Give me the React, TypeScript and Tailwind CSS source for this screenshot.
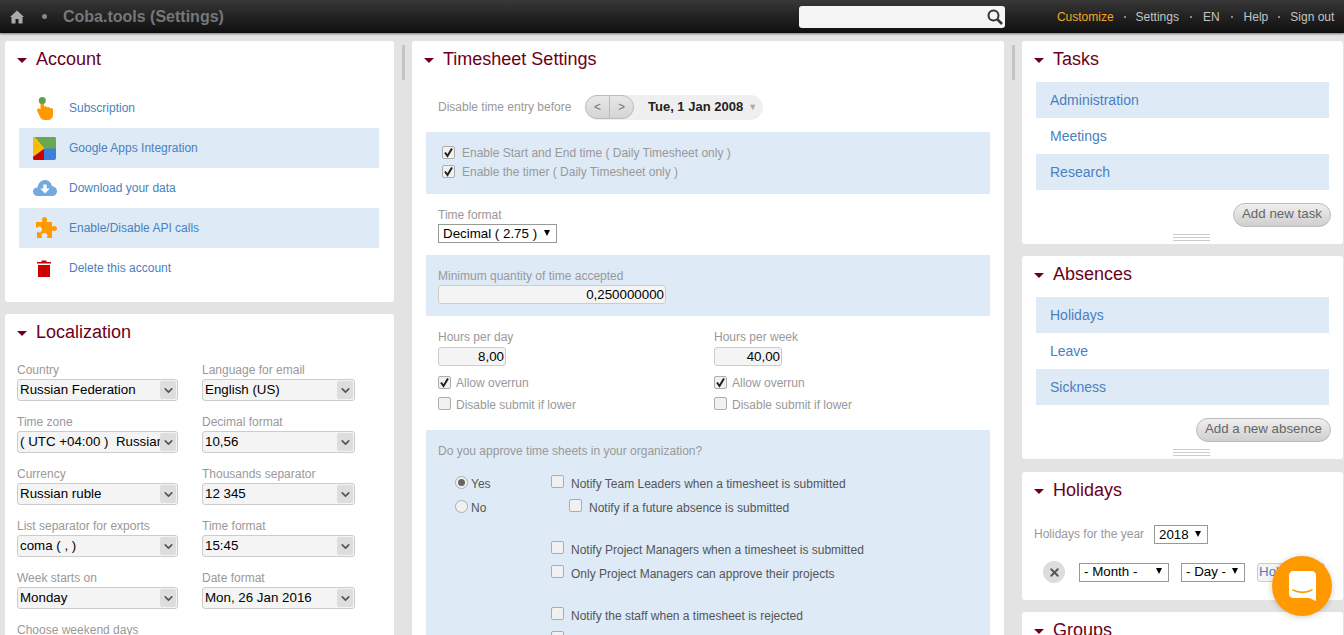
import { ChevronDown, X } from "lucide-react";

const localization = [
  ["Country", "Russian Federation", "Language for email", "English (US)"],
  ["Time zone", "( UTC +04:00 )  Russian", "Decimal format", "10,56"],
  ["Currency", "Russian ruble", "Thousands separator", "12 345"],
  ["List separator for exports", "coma ( , )", "Time format", "15:45"],
  ["Week starts on", "Monday", "Date format", "Mon, 26 Jan 2016"],
];

function CardTitle({ title }: { title: string }) {
  return (
    <div className="flex h-[36px] items-center pl-[12px]">
      <span className="mt-[2px] h-0 w-0 border-x-[5px] border-t-[5px] border-x-transparent border-t-[#6d0019]" />
      <h2 className="ml-[9px] text-[18px] leading-[22px] font-normal text-[#6d0019]">{title}</h2>
    </div>
  );
}

function HandIcon() {
  return (
    <svg width="16" height="23" viewBox="0 0 16 23">
      <path d="M3.500 6V12.500L2 11.500C0.500 11 -0.500 12.500 0.300 14L3 20C4 22 5.500 23 8 23H10.500C14 23 16 21 16 17.500V12.500C16 11 14 10.500 13 11.500C13 10 11 9.500 10 10.500C10 9.300 8.500 9 7 9.500V6C7 4 3.500 4 3.500 6Z" fill="#ff9900" />
      <circle cx="5.300" cy="3.500" r="3.500" fill="#5f9e4f" />
    </svg>
  );
}

function GoogleIcon() {
  return (
    <svg width="23" height="23" viewBox="0 0 23 23">
      <rect width="23" height="23" rx="2" fill="#3f7fdc" />
      <path d="M2 0H21C22 0 23 1 23 2V11.500H11.500Z" fill="#6aa84f" />
      <path d="M0 2C0 1 1 0 2 0L11.500 11.500L0 20Z" fill="#fbbc05" />
      <path d="M0 22V20L11 12V23H1Z" fill="#cc0000" />
    </svg>
  );
}

function CloudIcon() {
  return (
    <svg width="24" height="16" viewBox="0 0 24 16">
      <path d="M5 16C2 16 0 14 0 11.500C0 9 2 7.500 4.500 7.500C5 3 8.500 0 12 0C15.500 0 18 2.500 19 6C22 6.500 24 8.500 24 11C24 14 22 16 19 16Z" fill="#74a9dd" />
      <path d="M10.300 4.500H13.700V8.500H16.800L12 13.500L7.200 8.500H10.300Z" fill="#fff" />
    </svg>
  );
}

function PuzzleIcon() {
  return (
    <svg width="21" height="22" viewBox="0 0 21 22">
      <path d="M0 5H6.500C6.500 4 6 3.500 6 2.500C6 1 7 0 8.500 0C10 0 11 1 11 2.500C11 3.500 10.500 4 10.500 5H16V9.500C17 9.500 17.500 9 18.500 9C20 9 21 10 21 11.500C21 13 20 14 18.500 14C17.500 14 17 13.500 16 13.500V21H11C11 20 11.500 19.500 11.500 18.500C11.500 17 10 16 8.500 16C7 16 5.500 17 5.500 18.500C5.500 19.500 6 20 6 21H1V14.500C2 15 2.500 15.500 3.500 15.500C5 15.500 6 14 6 12.500C6 11 5 9.500 3.500 9.500C2.500 9.500 1 10.500 0 11Z" fill="#ff9900" />
    </svg>
  );
}

function TrashIcon() {
  return (
    <svg width="14" height="17" viewBox="0 0 14 17">
      <path d="M0 2H4.500V0.500H9.500V2H14V3.500H0Z" fill="#cc0000" />
      <path d="M1 5H13V17H1Z" fill="#cc0000" />
    </svg>
  );
}

const accountRows = [
  { label: "Subscription", icon: <HandIcon />, pad: "pl-[18px]", shaded: false },
  { label: "Google Apps Integration", icon: <GoogleIcon />, pad: "pl-[14px]", shaded: true },
  { label: "Download your data", icon: <CloudIcon />, pad: "pl-[14px]", shaded: false },
  { label: "Enable/Disable API calls", icon: <PuzzleIcon />, pad: "pl-[17px]", shaded: true },
  { label: "Delete this account", icon: <TrashIcon />, pad: "pl-[18px]", shaded: false },
];

function Check({ on = false }: { on?: boolean }) {
  return (
    <span className="flex h-[13px] w-[13px] shrink-0 items-center justify-center rounded-[2px] border border-[#adadad] bg-[#f1f1f1]">
      {on && (
        <svg width="11" height="11" viewBox="0 0 11 11">
          <path d="M2 5.500L4.500 9L9 1.500" fill="none" stroke="#222" strokeWidth="2" />
        </svg>
      )}
    </span>
  );
}

function Radio({ on = false }: { on?: boolean }) {
  return (
    <span className="flex h-[13px] w-[13px] shrink-0 items-center justify-center rounded-full border border-[#adadad] bg-[#f1f1f1]">
      {on && <span className="h-[7px] w-[7px] rounded-full bg-[#666]" />}
    </span>
  );
}

function PlainSelect({ value, className }: { value: string; className: string }) {
  return (
    <div className={`flex h-[19px] items-center justify-between border border-[#999] bg-white pr-[6px] pl-[4px] text-[13.33px] leading-none text-black ${className}`}>
      <span className="whitespace-nowrap">{value}</span>
      <span className="mb-[2px] h-0 w-0 border-x-[3.500px] border-t-[6px] border-x-transparent border-t-black" />
    </div>
  );
}

function NumberBox({ value, className }: { value: string; className: string }) {
  return (
    <div className={`flex h-[19px] items-center justify-end rounded-[3px] border border-[#ccc] bg-[#f4f4f4] pr-[1px] text-[13.33px] leading-none text-black ${className}`}>
      {value}
    </div>
  );
}

function HoursColumn({ label, value }: { label: string; value: string }) {
  return (
    <div>
      <div className="h-[17px] text-[12px] leading-[14px] text-[#999]">{label}</div>
      <NumberBox value={value} className="w-[68px]" />
      <div className="mt-[6px] flex h-[22px] items-center gap-[5px] text-[12px] text-[#999]">
        <span className="-mt-[1px]"><Check on /></span>
        Allow overrun
      </div>
      <div className="flex h-[22px] items-center gap-[5px] text-[12px] text-[#999]">
        <span className="-mt-[3px]"><Check /></span>
        Disable submit if lower
      </div>
    </div>
  );
}

function NotifyRow({ label, nested = false }: { label: string; nested?: boolean }) {
  return (
    <div className={`flex h-[24px] items-center gap-[7px] text-[12px] text-[#555] ${nested ? "pl-[18px]" : ""}`}>
      <span className="-mt-[5px]"><Check /></span>
      {label}
    </div>
  );
}

function ListCard({ title, items, action }: { title: string; items: string[]; action: string }) {
  return (
    <section className="h-[203px] shrink-0 rounded-[3px] bg-white">
      <CardTitle title={title} />
      <div className="mt-[5px] pr-[14px] pl-[14px]">
        {items.map((item, index) => (
          <div key={item} className={`flex h-[36px] items-center pl-[14px] text-[14px] text-[#4a7fc1] ${index % 2 === 0 ? "bg-[#deeaf6]" : ""}`}>
            {item}
          </div>
        ))}
      </div>
      <div className="mt-[13px] flex justify-end pr-[12px]">
        <button className="h-[24px] rounded-full border border-[#bbb] bg-gradient-to-b from-[#efefef] to-[#cfcfcf] px-[8px] pb-[2px] text-[13.33px] leading-none text-[#666]">
          {action}
        </button>
      </div>
      <div className="mt-[7px] ml-[151px] flex w-[37px] flex-col gap-[2px]">
        <span className="h-px bg-[#ccc]" />
        <span className="h-px bg-[#ccc]" />
        <span className="h-px bg-[#ccc]" />
      </div>
    </section>
  );
}

export default function App() {
  return (
    <div className="relative h-[635px] overflow-hidden bg-[#e3e3e3] font-['Liberation_Sans',Arial,sans-serif]">
      {/* Top bar */}
      <header className="flex h-[33px] items-center bg-gradient-to-b from-[#383838] to-[#0f0f0f] shadow-[0_1px_2px_#777]">
        <svg className="ml-[10px]" width="14" height="14" viewBox="0 0 14 14">
          <path d="M7 0.500L14 7L12.500 7V13.500H8.500V9H5.500V13.500H1.500V7H0Z" fill="#aaa" />
        </svg>
        <span className="ml-[18px] h-[5px] w-[5px] rounded-full bg-[#888]" />
        <span className="ml-[16px] text-[16px] font-bold text-[#777]">Coba.tools (Settings)</span>
        <div className="ml-[575px] flex h-[22px] w-[206px] items-center justify-end rounded-[3px] bg-[#f5f5f5] pr-[2px]">
          <svg width="16" height="16" viewBox="0 0 16 16">
            <circle cx="6.500" cy="6.500" r="5" fill="none" stroke="#333" strokeWidth="2" />
            <path d="M10.500 10.500L15 15" stroke="#333" strokeWidth="2.500" />
          </svg>
        </div>
        <nav className="ml-[52px] flex items-center text-[12px] text-[#c4c4c4]">
          <span className="text-[#f5a623]">Customize</span>
          <span className="mx-[10px] h-[2px] w-[2px] bg-[#888]" />
          <span>Settings</span>
          <span className="mx-[11px] h-[2px] w-[2px] bg-[#888]" />
          <span>EN</span>
          <span className="mx-[11px] h-[2px] w-[2px] bg-[#888]" />
          <span>Help</span>
          <span className="mx-[10px] h-[2px] w-[2px] bg-[#888]" />
          <span>Sign out</span>
        </nav>
      </header>

      <main className="flex pt-[8px] pl-[5px]">
        {/* Left column */}
        <div className="flex w-[389px] shrink-0 flex-col gap-[12px]">
          <section className="h-[261px] rounded-[3px] bg-white">
            <CardTitle title="Account" />
            <div className="mt-[11px] mr-[15px] ml-[14px]">
              {accountRows.map((row) => (
                <div key={row.label} className={`flex h-[40px] items-center text-[12px] text-[#4a7fc1] ${row.shaded ? "bg-[#deeaf6]" : ""}`}>
                  <div className={`flex w-[50px] shrink-0 ${row.pad}`}>{row.icon}</div>
                  {row.label}
                </div>
              ))}
            </div>
          </section>

          <section className="h-[400px] rounded-[3px] bg-white">
            <CardTitle title="Localization" />
            <div className="mt-[12px] grid grid-cols-[161px_153px] gap-x-[24px] gap-y-[13px] pl-[12px]">
              {localization.flatMap(([labelA, valueA, labelB, valueB]) => [
                [labelA, valueA],
                [labelB, valueB],
              ]).map(([label, value]) => (
                <div key={label}>
                  <div className="h-[17px] text-[12px] leading-[17px] text-[#999]">{label}</div>
                  <div className="flex h-[22px] items-center overflow-hidden rounded-[3px] border border-[#ccc] bg-[#f4f4f4] pr-[1px] pl-[2px] text-[13.33px] leading-none text-black">
                    <span className="min-w-0 flex-1 overflow-hidden pb-[1px] whitespace-pre">{value}</span>
                    <span className="flex h-[18px] w-[16px] shrink-0 items-center justify-center rounded-[2px] bg-[#ddd]">
                      <ChevronDown size={13} strokeWidth={3} color="#555" />
                    </span>
                  </div>
                </div>
              ))}
              <div className="h-[17px] text-[12px] leading-[17px] whitespace-nowrap text-[#999]">Choose weekend days</div>
            </div>
          </section>
        </div>

        {/* Gutter */}
        <div className="w-[18px] shrink-0 pt-[4px] pl-[8px]">
          <div className="h-[35px] w-[3px] bg-[#c4c4c4]" />
        </div>

        {/* Middle column */}
        <section className="h-[700px] w-[592px] shrink-0 rounded-[3px] bg-white">
          <CardTitle title="Timesheet Settings" />
          <div className="mt-[18px] flex h-[24px] items-center pl-[26px]">
            <span className="w-[147px] text-[12px] text-[#999]">Disable time entry before</span>
            <div className="flex h-[25px] w-[178px] items-center rounded-full bg-[#efefef]">
              <div className="flex h-[24px] w-[49px] rounded-full border border-[#bbb] bg-gradient-to-b from-[#e8e8e8] to-[#d4d4d4] text-[12px] text-[#777]">
                <span className="flex flex-1 items-center justify-center border-r border-[#bbb]">&lt;</span>
                <span className="flex flex-1 items-center justify-center">&gt;</span>
              </div>
              <span className="ml-[14px] text-[13px] font-bold text-[#222]">Tue, 1 Jan 2008</span>
              <span className="mt-[2px] ml-[5px] text-[9px] text-[#aaa]">▼</span>
            </div>
          </div>

          <div className="mx-[14px] mt-[13px] bg-[#deeaf6] pt-[11px] pb-[13px] pl-[16px] text-[12px] text-[#999]">
            <div className="flex h-[19px] items-center gap-[7px]"><Check on />Enable Start and End time ( Daily Timesheet only )</div>
            <div className="flex h-[19px] items-center gap-[7px]"><Check on />Enable the timer ( Daily Timesheet only )</div>
          </div>

          <div className="px-[26px] pt-[13px] pb-[12px]">
            <div className="h-[17px] text-[12px] leading-[17px] text-[#999]">Time format</div>
            <PlainSelect value="Decimal ( 2.75 )" className="w-[119px]" />
          </div>

          <div className="mx-[14px] bg-[#deeaf6] px-[12px] pt-[13px] pb-[12px]">
            <div className="h-[17px] text-[12px] leading-[17px] text-[#999]">Minimum quantity of time accepted</div>
            <NumberBox value="0,250000000" className="w-[228px]" />
          </div>

          <div className="grid grid-cols-[276px_1fr] px-[26px] pt-[14px] pb-[14px]">
            <HoursColumn label="Hours per day" value="8,00" />
            <HoursColumn label="Hours per week" value="40,00" />
          </div>

          <div className="mx-[14px] bg-[#deeaf6] pt-[12px] pb-[12px]">
            <div className="pl-[12px] text-[12px] leading-[18px] text-[#999]">Do you approve time sheets in your organization?</div>
            <div className="mt-[12px] flex pl-[29px]">
              <div className="w-[96px] shrink-0 text-[12px] text-[#555]">
                <div className="flex h-[24px] items-center gap-[3px]"><span className="-mt-[4px]"><Radio on /></span>Yes</div>
                <div className="flex h-[24px] items-center gap-[3px]"><span className="-mt-[4px]"><Radio /></span>No</div>
              </div>
              <div>
                <NotifyRow label="Notify Team Leaders when a timesheet is submitted" />
                <NotifyRow label="Notify if a future absence is submitted" nested />
                <div className="h-[18px]" />
                <NotifyRow label="Notify Project Managers when a timesheet is submitted" />
                <NotifyRow label="Only Project Managers can approve their projects" />
                <div className="h-[18px]" />
                <NotifyRow label="Notify the staff when a timesheet is rejected" />
                <NotifyRow label="" />
              </div>
            </div>
          </div>
        </section>

        {/* Gutter */}
        <div className="w-[18px] shrink-0 pt-[4px] pl-[8px]">
          <div className="h-[35px] w-[3px] bg-[#c4c4c4]" />
        </div>

        {/* Right column */}
        <div className="flex w-[321px] shrink-0 flex-col gap-[12px]">
          <ListCard title="Tasks" items={["Administration", "Meetings", "Research"]} action="Add new task" />
          <ListCard title="Absences" items={["Holidays", "Leave", "Sickness"]} action="Add a new absence" />

          <section className="mt-[1px] h-[128px] shrink-0 rounded-[3px] bg-white">
            <CardTitle title="Holidays" />
            <div className="mt-[17px] flex h-[19px] items-center pl-[12px]">
              <span className="w-[120px] pb-[2px] text-[12px] text-[#999]">Holidays for the year</span>
              <PlainSelect value="2018" className="w-[54px]" />
            </div>
            <div className="mt-[17px] flex h-[22px] items-center pl-[21px]">
              <span className="flex h-[22px] w-[22px] items-center justify-center rounded-full bg-[#ddd]">
                <X size={13} strokeWidth={3.500} color="#555" />
              </span>
              <PlainSelect value="- Month -" className="ml-[14px] w-[90px]" />
              <PlainSelect value="- Day -" className="ml-[12px] w-[64px]" />
              <div className="ml-[12px] flex h-[19px] w-[68px] items-center rounded-[3px] border border-[#ccc] bg-[#f4f4f4] pl-[1px] text-[13.33px] leading-none text-[#4a7fc1]">
                Holiday
              </div>
            </div>
          </section>

          <section className="h-[100px] shrink-0 rounded-[3px] bg-white">
            <CardTitle title="Groups" />
          </section>
        </div>
      </main>

      {/* Chat launcher */}
      <div className="absolute top-[556px] left-[1272px] flex h-[60px] w-[60px] items-center justify-center rounded-full bg-[#ff9900] shadow-[0_1px_6px_rgba(0,0,0,0.2)]">
        <svg width="27" height="30" viewBox="0 0 27 30">
          <path d="M4 0H23C25 0 27 2 27 4V30L20 27H4C2 27 0 25 0 23V4C0 2 2 0 4 0Z" fill="#fff" />
          <path d="M4 19C10 22 17 22 23 19" fill="none" stroke="#ff9900" strokeWidth="1.500" strokeLinecap="round" />
        </svg>
      </div>
    </div>
  );
}
